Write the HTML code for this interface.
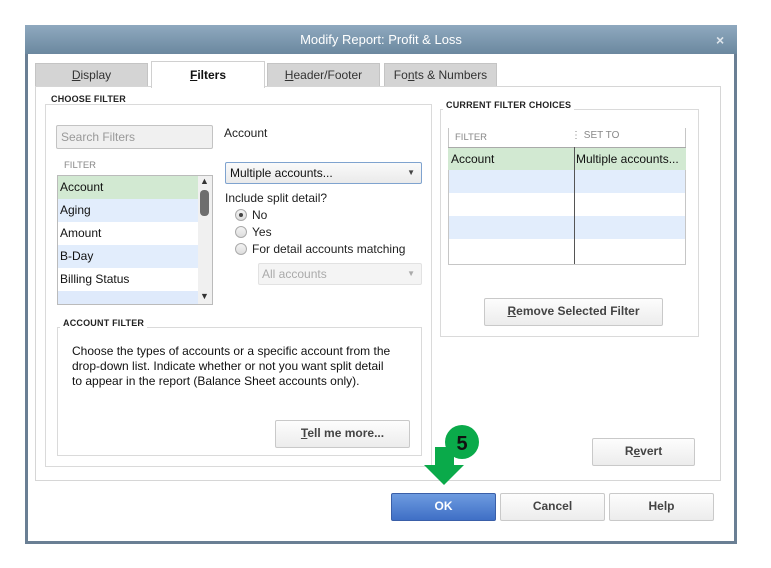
<!DOCTYPE html>
<html><head><meta charset="utf-8"><style>
*{box-sizing:border-box;margin:0;padding:0}
body{width:771px;height:568px;background:#fff;position:relative;overflow:hidden;font-family:"Liberation Sans",Arial,sans-serif;font-size:12px;color:#222}
.a{position:absolute}
.win{left:25px;top:25px;width:712px;height:519px;border:3px solid #6a7f94;border-top:none;background:#fff}
.title{left:25px;top:25px;width:712px;height:29px;background:linear-gradient(#8fa9bf,#6b889f);color:#fff;font-size:13px;text-align:center;line-height:30px}
.tab{height:24px;background:#d4d4d4;border:1px solid #c4c4c4;border-bottom:none;text-align:center;line-height:23px;font-size:12px;color:#333}
.grp{border:1px solid #dadada}
.lbl{background:#fff;font-size:9px;font-weight:bold;color:#222;padding:0 3px;letter-spacing:.2px}
.btn{border:1px solid #c9c9c9;border-radius:2px;background:linear-gradient(#fdfdfd,#ececec);text-align:center;font-size:12px;font-weight:bold;color:#444;line-height:25px}
.row{left:58px;width:140px;height:23px;line-height:23px;padding-left:2px;font-size:12px;color:#111}
.rad{width:12px;height:12px;border-radius:50%;border:1px solid #aaa;background:linear-gradient(#f3f3f3,#ddd)}
u{text-decoration:underline}
</style></head><body>
<div class="a win"></div>
<div class="a title">Modify Report: Profit &amp; Loss</div>
<div class="a" style="left:716px;top:32px;color:#dfe6ec;font-weight:bold;font-size:14px">×</div>

<div class="a tab" style="left:35px;top:63px;width:113px"><u>D</u>isplay</div>
<div class="a tab" style="left:267px;top:63px;width:113px"><u>H</u>eader/Footer</div>
<div class="a tab" style="left:384px;top:63px;width:113px">Fo<u>n</u>ts &amp; Numbers</div>
<div class="a" style="left:35px;top:86px;width:686px;height:395px;border:1px solid #d6d6d6"></div>
<div class="a tab" style="left:151px;top:61px;width:114px;height:27px;background:#fff;border-color:#d0d0d0;font-weight:bold;color:#111;line-height:26px"><u>F</u>ilters</div>

<div class="a grp" style="left:45px;top:104px;width:387px;height:363px"></div>
<div class="a lbl" style="left:48px;top:94px">CHOOSE FILTER</div>
<div class="a" style="left:56px;top:125px;width:157px;height:24px;border:1px solid #c3c3c3;border-radius:2px;background:#f0f0f0;color:#999;line-height:22px;padding-left:4px">Search Filters</div>
<div class="a" style="left:224px;top:126px">Account</div>
<div class="a" style="left:64px;top:160px;font-size:9.5px;color:#888">FILTER</div>
<div class="a" style="left:57px;top:175px;width:156px;height:130px;border:1px solid #bbb;background:#dfeafb"></div>
<div class="a row" style="top:176px;background:#d2e9d2">Account</div>
<div class="a row" style="top:199px;background:#e2edfc">Aging</div>
<div class="a row" style="top:222px;background:#fff">Amount</div>
<div class="a row" style="top:245px;background:#e2edfc">B-Day</div>
<div class="a row" style="top:268px;background:#fff">Billing Status</div>
<div class="a" style="left:198px;top:176px;width:14px;height:128px;background:#f0f0f0"></div>
<div class="a" style="left:200px;top:176px;font-size:9px;color:#333">▲</div>
<div class="a" style="left:200px;top:190px;width:9px;height:26px;border-radius:4px;background:#6e6e6e"></div>
<div class="a" style="left:200px;top:291px;font-size:9px;color:#333">▼</div>

<div class="a" style="left:225px;top:162px;width:197px;height:22px;border:1px solid #7fa3cf;border-radius:2px;background:linear-gradient(#fafafa,#eaeaea);line-height:20px;padding-left:4px;color:#111">Multiple accounts...<span class="a" style="right:6px;top:0;font-size:8px;color:#444">▼</span></div>
<div class="a" style="left:225px;top:191px">Include split detail?</div>
<div class="a rad" style="left:235px;top:209px"><div class="a" style="left:3px;top:3px;width:4px;height:4px;border-radius:50%;background:#444"></div></div>
<div class="a" style="left:252px;top:208px">No</div>
<div class="a rad" style="left:235px;top:226px"></div>
<div class="a" style="left:252px;top:225px">Yes</div>
<div class="a rad" style="left:235px;top:243px"></div>
<div class="a" style="left:252px;top:242px">For detail accounts matching</div>
<div class="a" style="left:258px;top:263px;width:164px;height:22px;border:1px solid #e2e2e2;border-radius:2px;background:#f4f4f4;color:#aaa;line-height:20px;padding-left:3px">All accounts<span class="a" style="right:6px;top:0;font-size:8px;color:#aaa">▼</span></div>

<div class="a grp" style="left:57px;top:327px;width:365px;height:129px"></div>
<div class="a lbl" style="left:60px;top:318px">ACCOUNT FILTER</div>
<div class="a" style="left:72px;top:344px;line-height:15px;font-size:12px;color:#111">Choose the types of accounts or a specific account from the<br>drop-down list. Indicate whether or not you want split detail<br>to appear in the report (Balance Sheet accounts only).</div>
<div class="a btn" style="left:275px;top:420px;width:135px;height:28px"><u>T</u>ell me more...</div>

<div class="a grp" style="left:440px;top:109px;width:259px;height:228px"></div>
<div class="a lbl" style="left:443px;top:100px">CURRENT FILTER CHOICES</div>
<div class="a" style="left:448px;top:128px;width:238px;height:137px;border:1px solid #c6c6c6;border-top:none;background:#fff"></div>
<div class="a" style="left:455px;top:132px;font-size:9.5px;color:#888">FILTER</div>
<div class="a" style="left:571px;top:130px;font-size:10px;color:#888">⋮ SET TO</div>
<div class="a" style="left:448px;top:147px;width:238px;height:23px;background:#d2e9d2;border-top:1px solid #aaa;line-height:22px;padding-left:3px;color:#111">Account<span class="a" style="left:128px">Multiple accounts...</span></div>
<div class="a" style="left:449px;top:170px;width:236px;height:23px;background:#e2edfc"></div>
<div class="a" style="left:449px;top:216px;width:236px;height:23px;background:#e2edfc"></div>
<div class="a" style="left:574px;top:147px;width:1px;height:117px;background:#555"></div>
<div class="a btn" style="left:484px;top:298px;width:179px;height:28px"><u>R</u>emove Selected Filter</div>
<div class="a btn" style="left:592px;top:438px;width:103px;height:28px">R<u>e</u>vert</div>

<div class="a btn" style="left:391px;top:493px;width:105px;height:28px;background:linear-gradient(#6d9be0,#3f6fc6);border-color:#3a5fa8;color:#fff">OK</div>
<div class="a btn" style="left:500px;top:493px;width:105px;height:28px">Cancel</div>
<div class="a btn" style="left:609px;top:493px;width:105px;height:28px">Help</div>

<svg class="a" style="left:420px;top:420px" width="70" height="70">
<circle cx="42" cy="22" r="17" fill="#0aaa4a"/>
<text x="42" y="30" text-anchor="middle" font-family="Liberation Sans,sans-serif" font-weight="bold" font-size="20" fill="#111">5</text>
<polygon points="15,27 34,27 34,45 44,45 24,65 4,45 15,45" fill="#0aaa4a"/>
</svg>
</body></html>
